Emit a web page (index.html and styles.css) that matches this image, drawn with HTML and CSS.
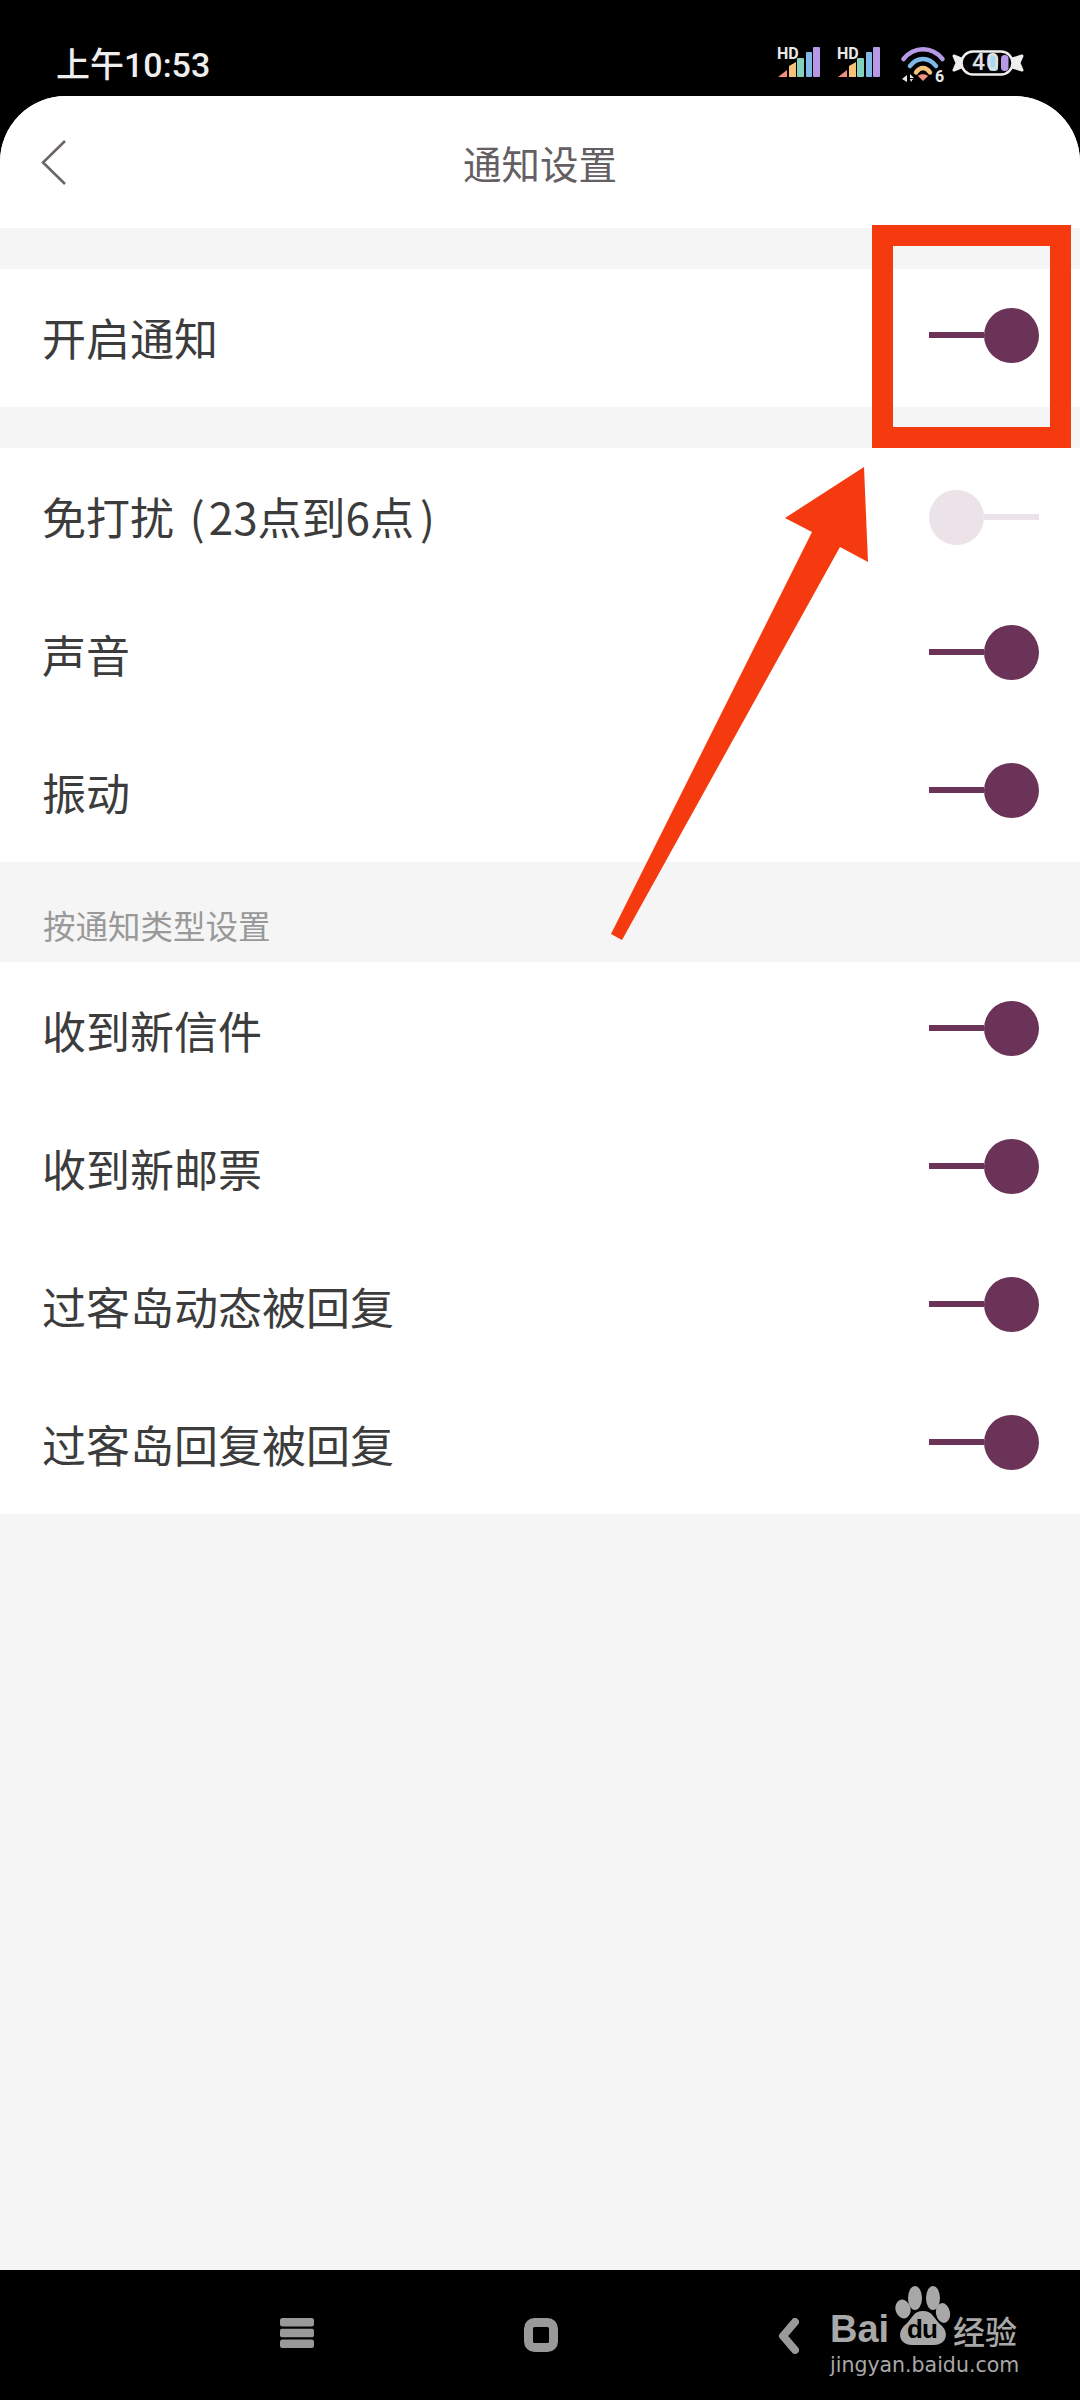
FILE: index.html
```html
<!DOCTYPE html>
<html lang="zh-CN">
<head>
<meta charset="utf-8">
<title>通知设置</title>
<link rel="stylesheet" href="styles.css">
</head>
<body>
<div class="screen">
  <header class="status">
    <span class="time">上午10:53</span>
    <div class="status-icons">
      <div class="sig">
        <svg viewBox="0 0 44 30"><path d="M1 30 L10 23 V30Z" fill="#f28f7d"/><path d="M12 19 L19 15 V30 H12Z" fill="#f6c27a"/><rect x="20" y="11" width="7" height="19" rx="1" fill="#83d2bd"/><rect x="29" y="5" width="6" height="25" rx="1" fill="#7fb9e8"/><rect x="36" y="0" width="7" height="30" rx="1" fill="#b79ae6"/></svg>
        <span class="hd">HD</span>
      </div>
      <div class="sig sig2">
        <svg viewBox="0 0 44 30"><path d="M1 30 L10 23 V30Z" fill="#f28f7d"/><path d="M12 19 L19 15 V30 H12Z" fill="#f6c27a"/><rect x="20" y="11" width="7" height="19" rx="1" fill="#83d2bd"/><rect x="29" y="5" width="6" height="25" rx="1" fill="#7fb9e8"/><rect x="36" y="0" width="7" height="30" rx="1" fill="#b79ae6"/></svg>
        <span class="hd">HD</span>
      </div>
      <div class="wifi">
        <svg viewBox="0 0 44 36"><path d="M2.5 12 C13 -1 31 -1 41.5 12" fill="none" stroke="#b79ae6" stroke-width="4.5" stroke-linecap="round"/><path d="M9 19 C16 9.5 28 9.5 35 19" fill="none" stroke="#7fb9e8" stroke-width="4.5" stroke-linecap="round"/><path d="M15 25.500 C19 19.500 25 19.500 29 25.500" fill="none" stroke="#f6c27a" stroke-width="4.5" stroke-linecap="round"/><path d="M17 29 C19 26.500 25 26.500 27 29 L22 34Z" fill="#f28f7d"/><path d="M6 28 V35 L1 32Z M9 27 L13 31 H9Z M9 32 H12 L10 35Z" fill="#e6e6e6"/></svg>
        <span class="six">6</span>
      </div>
      <div class="batt">
        <svg viewBox="0 0 72 26"><path d="M9 9 L2 6 L5 13 L2 20 L9 17Z M60 9 L70 6 L67 13 L70 20 L60 17Z" fill="#eee" stroke="#eee" stroke-width="3" stroke-linejoin="round"/><rect x="9.500" y="1.500" width="51" height="23" rx="11.500" fill="#000" stroke="#eee" stroke-width="2.500"/><rect x="37" y="5" width="9" height="16" rx="3" fill="#a8d8f2"/><rect x="49" y="5" width="7.500" height="16" rx="3.500" fill="#b79ae6"/></svg>
        <span class="pct">40</span>
      </div>
    </div>
  </header>

  <main class="panel">
    <div class="nav">
      <svg class="back" viewBox="0 0 28 48"><path d="M25 2 L3 23.500 L25 45" fill="none" stroke="#6b6468" stroke-width="2.600"/></svg>
      <h1 class="title">通知设置</h1>
    </div>

    <section class="group first">
      <div class="row"><span class="label">开启通知</span><span class="toggle on"><i class="track"></i><i class="knob"></i></span></div>
    </section>

    <section class="group second">
      <div class="row"><span class="label">免打扰 <span class="paren-l">(</span>23点到6点<span class="paren-r">)</span></span><span class="toggle off"><i class="knob"></i><i class="track"></i></span></div>
      <div class="row"><span class="label">声音</span><span class="toggle on"><i class="track"></i><i class="knob"></i></span></div>
      <div class="row"><span class="label">振动</span><span class="toggle on"><i class="track"></i><i class="knob"></i></span></div>
    </section>

    <div class="section-head">按通知类型设置</div>

    <section class="group">
      <div class="row"><span class="label">收到新信件</span><span class="toggle on"><i class="track"></i><i class="knob"></i></span></div>
      <div class="row"><span class="label">收到新邮票</span><span class="toggle on"><i class="track"></i><i class="knob"></i></span></div>
      <div class="row"><span class="label">过客岛动态被回复</span><span class="toggle on"><i class="track"></i><i class="knob"></i></span></div>
      <div class="row"><span class="label">过客岛回复被回复</span><span class="toggle on"><i class="track"></i><i class="knob"></i></span></div>
    </section>
  </main>

  <footer class="navbar">
    <svg class="nav-menu" viewBox="0 0 34 30"><rect y="0" width="34" height="8.500" rx="2.500"/><rect y="10.700" width="34" height="8.500" rx="2"/><rect y="21.500" width="34" height="8.500" rx="2.500"/></svg>
    <svg class="nav-home" viewBox="0 0 34 34"><rect x="4.500" y="4.500" width="25" height="25" rx="6" fill="none" stroke="#999" stroke-width="9"/></svg>
    <svg class="nav-back" viewBox="0 0 22 36"><path d="M18 4 L6 18 L18 32" fill="none" stroke="#999" stroke-width="8" stroke-linecap="round" stroke-linejoin="round"/></svg>
  </footer>

  <div class="annotation-box"></div>
  <svg class="annotation-arrow" viewBox="0 0 1080 2400"><polygon points="864,467 785,518 812,532 611,934 622,940 840,547 868,562" fill="#f63a0f"/></svg>

  <div class="watermark">
    <div class="wm-top">
      <span class="wm-bai">Bai</span>
      <span class="wm-paw">
        <svg viewBox="0 0 56 60"><ellipse cx="20" cy="12" rx="7" ry="12"/><ellipse cx="38" cy="12" rx="7" ry="12"/><ellipse cx="8" cy="23" rx="7.500" ry="9.500" transform="rotate(-15 8 23)"/><ellipse cx="48" cy="27" rx="7" ry="10" transform="rotate(-10 48 27)"/><path d="M28 25 C38 25 38 32 46 39 C55 47 51 59 39 59 L17 59 C5 59 1 47 10 39 C18 32 18 25 28 25Z"/></svg>
        <span class="wm-du">du</span>
      </span>
      <span class="wm-cn">经验</span>
    </div>
    <div class="wm-url">jingyan.baidu.com</div>
  </div>
</div>
</body>
</html>
```

FILE: styles.css
```css
* { box-sizing: border-box; }
html, body { margin: 0; padding: 0; background: #000; }
body { font-family: "Noto Sans CJK SC", "Noto Sans", sans-serif; }

.screen {
  position: relative;
  width: 1080px;
  height: 2400px;
  display: flex;
  flex-direction: column;
  background: #000;
  overflow: hidden;
}

/* status bar */
.status {
  height: 96px;
  flex: none;
  display: flex;
  justify-content: space-between;
  padding: 44px 56px 0 56px;
  color: #eee;
}
.time { font-size: 34px; line-height: 42px; font-weight: 500; font-family: "Roboto", "Noto Sans CJK SC", sans-serif; }
.status-icons { display: flex; align-items: flex-start; margin-top: 3px; }
.sig, .wifi, .batt { position: relative; display: block; }
.sig svg, .wifi svg, .batt svg { width: 100%; height: 100%; display: block; overflow: visible; }
.sig { width: 44px; height: 30px; }
.sig2 { margin-left: 16px; }
.wifi { width: 44px; height: 36px; margin-left: 20px; }
.batt { width: 72px; height: 26px; margin-left: 7px; margin-top: 3px; }
.hd { position: absolute; left: 0; top: 0; font: 700 16px/14px "Roboto", sans-serif; color: #e8e8e8; }
.six { position: absolute; left: 34px; top: 23px; font: 700 16px/14px "Roboto", sans-serif; color: #e8e8e8; }
.pct { position: absolute; left: 20px; top: 3px; font: 500 23px/20px "Roboto", sans-serif; color: #e0e0e0; letter-spacing: 1px; }

/* panel */
.panel {
  flex: 1;
  background: #f5f5f5;
  border-radius: 66px 66px 0 0;
  overflow: hidden;
}
.nav {
  height: 132px;
  background: #fff;
  display: flex;
  align-items: center;
  justify-content: center;
  position: relative;
}
.back { position: absolute; left: 40px; top: 43px; width: 28px; height: 48px; }
.title { margin: 0; font-size: 38.5px; font-weight: 400; color: #655e62; line-height: 50px; }

.group { background: #fff; }
.group.first { margin-top: 41px; }
.group.second { margin-top: 41px; }
.row {
  height: 138px;
  display: flex;
  align-items: center;
  justify-content: space-between;
  padding: 0 41px 0 42px;
}
.label { font-size: 44px; line-height: 56px; color: #3c3c3c; margin-bottom: 3px; }
.paren-l { margin-left: 6px; margin-right: 4px; }
.paren-r { margin-left: 6px; }

.toggle { display: flex; align-items: center; width: 110px; height: 55px; }
.toggle.on { margin-bottom: 6px; }
.track { flex: 1; height: 6px; }
.knob { width: 55px; height: 55px; border-radius: 50%; flex: none; }
.toggle.on .track, .toggle.on .knob { background: #6b3357; }
.toggle.off .track, .toggle.off .knob { background: #ece3e9; }

.section-head {
  height: 100px;
  padding: 40px 0 0 43px;
  font-size: 32.5px;
  line-height: 46px;
  color: #999;
}

/* bottom bar */
.navbar {
  height: 130px;
  flex: none;
  background: #000;
  position: relative;
  display: flex;
  align-items: flex-start;
  padding-top: 48px;
}
.nav-menu { width: 34px; height: 30px; margin-left: 280px; fill: #999; display: block; }
.nav-home { width: 34px; height: 34px; margin-left: 210px; display: block; }
.nav-back { width: 22px; height: 36px; margin-left: 219px; display: block; }

/* annotations drawn over the screenshot */
.annotation-box {
  position: absolute;
  left: 872px;
  top: 225px;
  width: 199px;
  height: 223px;
  border: 21px solid #f63a0f;
}
.annotation-arrow { position: absolute; left: 0; top: 0; width: 1080px; height: 2400px; pointer-events: none; }

/* watermark */
.watermark {
  position: absolute;
  left: 830px;
  top: 2286px;
  width: 195px;
  color: #a8a8a8;
}
.wm-top { display: flex; align-items: flex-end; height: 60px; }
.wm-bai { font: 700 38px/38px "Liberation Sans", sans-serif; width: 65px; flex: none; margin-bottom: -2px; }
.wm-paw { position: relative; width: 56px; height: 60px; display: block; flex: none; }
.wm-paw svg { width: 56px; height: 60px; fill: #a8a8a8; display: block; }
.wm-du { position: absolute; left: 12px; top: 29px; font: 700 26px/28px "Liberation Sans", sans-serif; letter-spacing: -1px; color: #000; }
.wm-cn { font-size: 32px; line-height: 40px; font-weight: 500; margin-left: 2px; margin-bottom: -4px; white-space: nowrap; }
.wm-url { font: 400 20.5px/20px "DejaVu Sans", sans-serif; margin-top: 9px; white-space: nowrap; }
```
